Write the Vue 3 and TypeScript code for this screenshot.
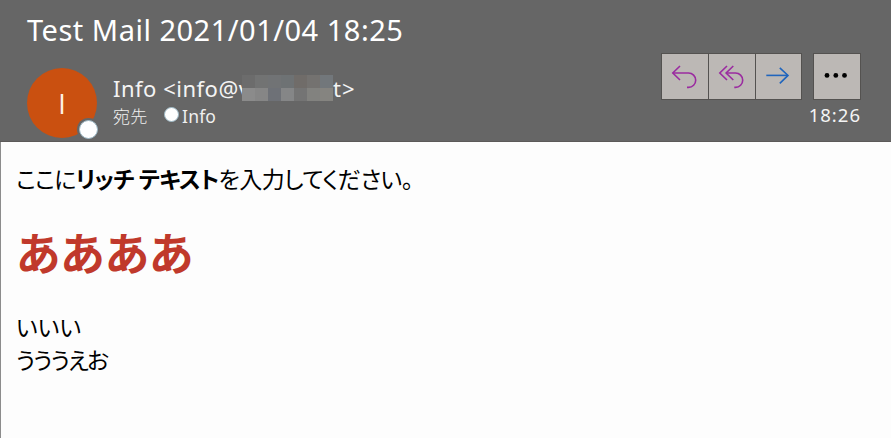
<script setup lang="ts">
interface MailAction {
  name: string
  label: string
  paths: string[]
}

const subject = 'Test Mail 2021/01/04 18:25'
const time = '18:26'

const actions: MailAction[] = [
  {
    name: 'reply',
    label: 'Reply',
    paths: ['M19 13L11.8 20L19 27', 'M11.8 20H27.5A7.2 7.2 0 0 1 27.5 34.4H26']
  },
  {
    name: 'reply-all',
    label: 'Reply all',
    paths: ['M19 13L11.8 20L19 27', 'M25.3 13L18.1 20L25.3 27', 'M18.1 20H27.5A7.2 7.2 0 0 1 27.5 34.4H26.3']
  },
  {
    name: 'forward',
    label: 'Forward',
    paths: ['M11.3 22.4H33', 'M24.8 14.8L33 22.4L24.8 30.3']
  }
]

// Blocks that hide the address, row by row
const maskCells: string[] = [
  '#6c6c6c', '#727373', '#717375', '#6e7274', '#706c69', '#747270', '#72777b',
  '#8b8b8b', '#868686', '#6e7177', '#858687', '#747474', '#82827f', '#858480'
]
</script>

<template>
  <div class="mail">
    <header class="mail-header">
      <div class="header-main">
        <h1 class="subject">{{ subject }}</h1>
        <div class="sender">
          <div class="avatar">
            I
            <span class="presence avatar-presence" />
          </div>
          <div class="sender-info">
            <div class="from">
              <span class="from-start">Info &lt;info@v</span>
              <span class="mask">
                <i v-for="(color, i) in maskCells" :key="i" :style="{ background: color }" />
              </span>
              <span class="from-end">t&gt;</span>
            </div>
            <div class="to">
              <span class="to-label">宛先</span>
              <span class="presence" />
              <span class="to-name">Info</span>
            </div>
          </div>
        </div>
      </div>
      <div class="header-side">
        <div class="actions">
          <div class="action-group">
            <button v-for="action in actions" :key="action.name" :class="action.name" :aria-label="action.label">
              <svg viewBox="0 0 47 47" width="47" height="47">
                <path v-for="d in action.paths" :key="d" :d="d" fill="none" stroke="currentColor" stroke-width="1.6" />
              </svg>
            </button>
          </div>
          <button class="more" aria-label="More actions">
            <svg viewBox="0 0 47 47" width="47" height="47" fill="currentColor">
              <circle cx="14" cy="22.4" r="2.4" />
              <circle cx="22.8" cy="22.4" r="2.4" />
              <circle cx="31.5" cy="22.4" r="2.4" />
            </svg>
          </button>
        </div>
        <div class="time">{{ time }}</div>
      </div>
    </header>
    <main class="mail-body">
      <p><span class="lead-start">ここに</span><b>リッチ テキスト</b><span class="lead-end">を入力してください。</span></p>
      <h2>ああああ</h2>
      <p>いいい</p>
      <p class="tight">うううえお</p>
    </main>
  </div>
</template>

<style>
body {
  background: #666;
}
</style>

<style scoped>
.mail {
  display: flex;
  flex-direction: column;
  height: 438px;
  overflow: hidden;
  background: #666;
  color: #fff;
  font-family: "Noto Sans", "Noto Sans CJK JP", sans-serif;
}

.mail-header {
  display: flex;
  justify-content: space-between;
  box-sizing: border-box;
  height: 142px;
  padding: 0 30px 0 27px;
  border-bottom: 1px solid #5c5a59;
}

.subject {
  height: 40px;
  margin: 10px 0 18px;
  font-size: 29px;
  font-weight: 400;
  line-height: 40px;
  letter-spacing: 0.5px;
  white-space: nowrap;
}

.sender {
  display: flex;
}

.avatar {
  position: relative;
  width: 70px;
  height: 70px;
  border-radius: 50%;
  background: #ca5010;
  color: #fff0e8;
  font-family: "Open Sans", sans-serif;
  font-size: 27px;
  line-height: 71px;
  text-align: center;
}

.presence {
  position: relative;
  top: -1px;
  box-sizing: border-box;
  width: 15px;
  height: 15px;
  border: 1px solid #9db9c6;
  border-radius: 50%;
  background: #fff;
}

.avatar-presence {
  position: absolute;
  top: auto;
  right: -1px;
  bottom: -1px;
  width: 19px;
  height: 19px;
  box-shadow: 0 0 0 2px #666;
}

.sender-info {
  margin-left: 16px;
}

.from {
  display: flex;
  height: 33px;
  margin-top: 4px;
  font-size: 22px;
  line-height: 33px;
  letter-spacing: 0.5px;
  white-space: nowrap;
  color: #f4f4f4;
}

.from-start {
  width: 129px;
}

.from-end {
  letter-spacing: 1px;
}

.mask {
  position: relative;
  display: grid;
  grid-template-columns: repeat(7, 13px);
  grid-template-rows: repeat(2, 13px);
  height: 26px;
  margin-top: 3px;
}

.to {
  display: flex;
  align-items: center;
  height: 21px;
  font-size: 17.5px;
  line-height: 20px;
  letter-spacing: 0.2px;
  color: #f0f0f0;
}

.to-label {
  width: 51px;
  font-family: "Noto Sans CJK JP", sans-serif;
  font-size: 17px;
  font-weight: 300;
}

.to-name {
  margin-left: 3px;
}

.header-side {
  padding-top: 53px;
}

.actions {
  display: flex;
  justify-content: flex-end;
  gap: 11px;
}

.action-group {
  display: flex;
}

.action-group button + button {
  margin-left: -1px;
}

button {
  box-sizing: border-box;
  width: 48px;
  height: 47px;
  padding: 0;
  border: 1px solid #545250;
  background: #bcb8b5;
}

button svg {
  display: block;
  margin: -1px;
}

.reply,
.reply-all {
  color: #9a2ba0;
}

.forward {
  width: 47px;
  color: #2065bd;
}

.more {
  color: #000;
}

.time {
  height: 30px;
  font-size: 18.5px;
  line-height: 29px;
  letter-spacing: 1px;
  text-align: right;
  color: #f4f4f4;
}

.mail-body {
  flex: 1;
  padding: 20px 0 0 15px;
  border-left: 1px solid #8c8c8c;
  background: #fdfdfd;
  color: #000;
  font-family: "Noto Sans CJK JP", sans-serif;
  font-feature-settings: "palt";
  white-space: nowrap;
}

.mail-body p {
  height: 33px;
  margin: 0;
  font-size: 23px;
  line-height: 33px;
}

.lead-start {
  letter-spacing: -0.8px;
}

.mail-body b {
  letter-spacing: -0.7px;
}

.lead-end {
  letter-spacing: -0.5px;
}

.mail-body .tight {
  letter-spacing: -1.8px;
}

.mail-body h2 {
  height: 70px;
  margin: 22px 0 23px;
  color: #c0392b;
  font-size: 45px;
  font-weight: 700;
  line-height: 70px;
}
</style>
